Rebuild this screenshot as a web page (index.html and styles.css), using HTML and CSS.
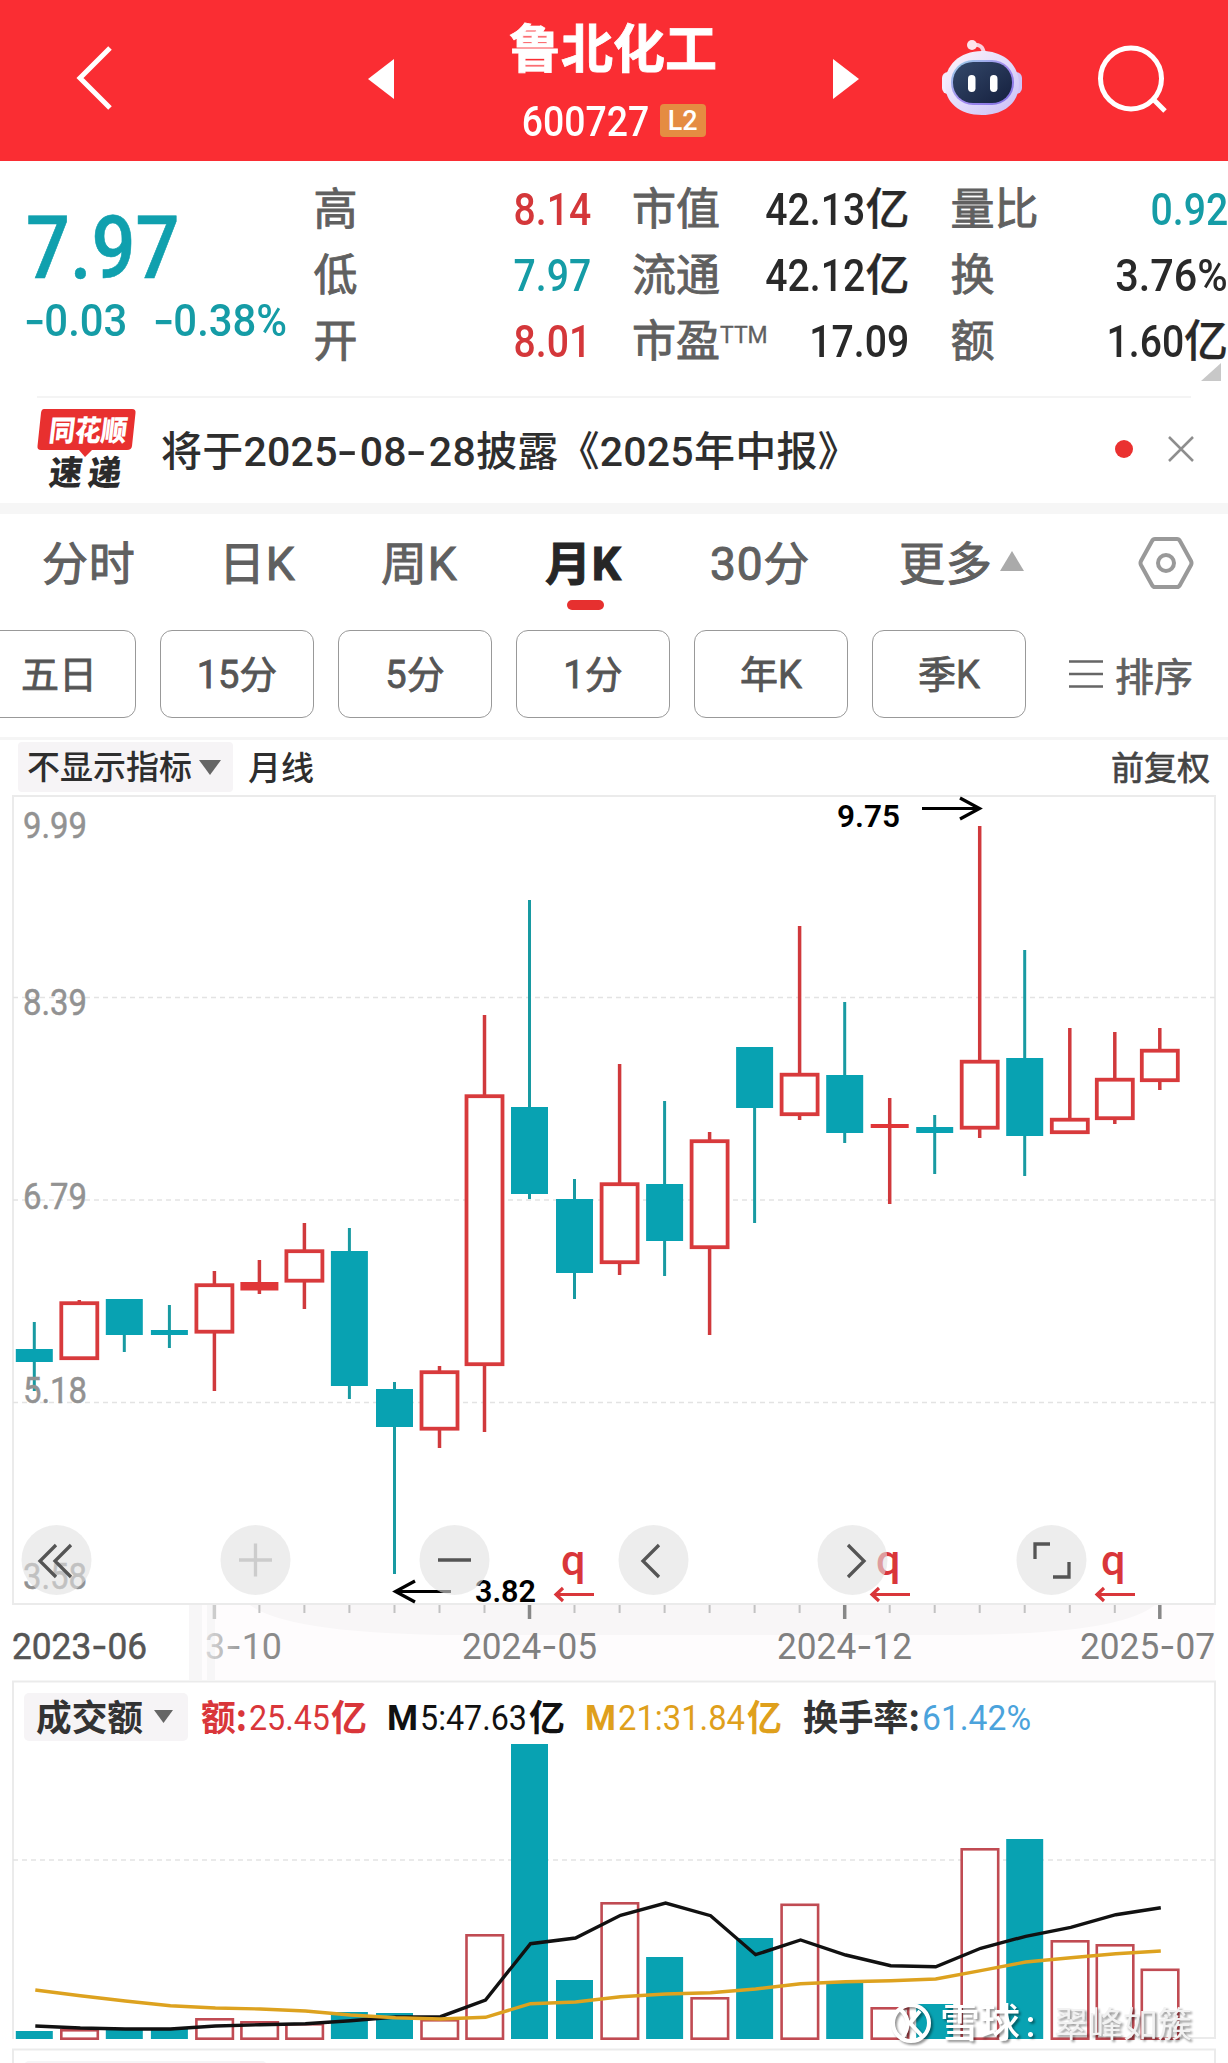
FILE: index.html
```html
<!DOCTYPE html>
<html lang="zh-CN">
<head>
<meta charset="utf-8">
<title>鲁北化工 600727</title>
<link rel="stylesheet" href="styles.css">
</head>
<body>
<header class="top">
  <svg class="back" width="44" height="68" viewBox="0 0 44 68"><path d="M38 4 8 34 38 64"/></svg>
  <svg class="prev" width="28" height="42" viewBox="0 0 28 42"><path d="M27 0V40L1 20Z"/></svg>
  <div class="title">
    <h1>鲁北化工</h1>
    <div class="code"><span class="num">600727</span><span class="badge">L2</span></div>
  </div>
  <svg class="next" width="28" height="42" viewBox="0 0 28 42"><path d="M0 0V40L26 20Z"/></svg>
  <svg class="robot" width="84" height="78" viewBox="0 0 84 78">
    <defs>
      <linearGradient id="shell" x1="0" y1="0" x2="1" y2="1"><stop offset="0" stop-color="#fff4fa"/><stop offset=".5" stop-color="#e3dcfb"/><stop offset="1" stop-color="#c9bdf6"/></linearGradient>
      <linearGradient id="rim" x1="0" y1="0" x2="1" y2="1"><stop offset="0" stop-color="#9ad6e6"/><stop offset=".5" stop-color="#a58cf0"/><stop offset="1" stop-color="#7b6de0"/></linearGradient>
      <linearGradient id="face" x1="0" y1="0" x2="1" y2="1"><stop offset="0" stop-color="#34486a"/><stop offset="1" stop-color="#15203e"/></linearGradient>
    </defs>
    <path d="M32 7Q43 5 44 16" fill="none" stroke="#fbd0dc" stroke-width="4"/>
    <circle cx="32" cy="7" r="5" fill="#fde4ec"/>
    <rect x="2" y="34" width="12" height="22" rx="6" fill="#f3ecfd"/>
    <rect x="70" y="34" width="12" height="22" rx="6" fill="#cfc3f8"/>
    <path d="M42 13C65 13 79 28 79 46S65 77 42 77 5 64 5 46 19 13 42 13Z" fill="url(#shell)"/>
    <rect x="11" y="22" width="63" height="45" rx="22" fill="url(#rim)"/>
    <rect x="13" y="24" width="59" height="41" rx="20" fill="url(#face)"/>
    <rect x="28" y="37" width="7.500" height="17" rx="3.700" fill="#fff"/>
    <rect x="50" y="37" width="7.500" height="17" rx="3.700" fill="#fff"/>
  </svg>
  <svg class="search" width="72" height="72" viewBox="0 0 72 72"><circle cx="33" cy="34.500" r="30.500"/><path d="M55 55 67 67"/></svg>
</header>

<section class="quote">
  <div class="last">
    <div class="price num">7.97</div>
    <div class="change"><span class="num"><i>-</i>0.03</span><span class="num"><i>-</i>0.38%</span></div>
  </div>
  <dl class="stats">
    <div><dt>高</dt><dd class="up"><span class="num">8.14</span></dd></div>
    <div><dt>低</dt><dd class="down"><span class="num">7.97</span></dd></div>
    <div><dt>开</dt><dd class="up"><span class="num">8.01</span></dd></div>
  </dl>
  <dl class="stats">
    <div><dt>市值</dt><dd><span class="num">42.13</span>亿</dd></div>
    <div><dt>流通</dt><dd><span class="num">42.12</span>亿</dd></div>
    <div><dt>市盈<sup>TTM</sup></dt><dd><span class="num">17.09</span></dd></div>
  </dl>
  <dl class="stats">
    <div><dt>量比</dt><dd class="down"><span class="num">0.92</span></dd></div>
    <div><dt>换</dt><dd><span class="num wide">3.76%</span></dd></div>
    <div><dt>额</dt><dd><span class="num">1.60</span>亿</dd></div>
  </dl>
  <svg class="corner" width="20" height="18" viewBox="0 0 20 18"><path d="M20 0V18H0Z"/></svg>
</section>

<section class="news">
  <svg class="logo" width="102" height="88" viewBox="0 0 102 88">
    <path d="M8 3H96Q100 3 99.500 7L96 40Q95.500 44 91 44H56L49 51 43 44H5Q1 44 1.500 40L5 7Q5.500 3 8 3Z" fill="#e8302f"/>
    <text transform="translate(12 35) skewX(-7)" textLength="78" lengthAdjust="spacingAndGlyphs" font-size="29" fill="#fff">同花顺</text>
    <text transform="translate(12 79) skewX(-7)" textLength="33" lengthAdjust="spacingAndGlyphs" font-size="34" fill="#2b2b2b">速</text>
    <text transform="translate(51 79) skewX(-7)" textLength="33" lengthAdjust="spacingAndGlyphs" font-size="34" fill="#2b2b2b">递</text>
  </svg>
  <p>将于2025<i>-</i>08<i>-</i>28披露《2025年中报》</p>
  <span class="dot"></span>
  <svg class="x" width="28" height="28" viewBox="0 0 28 28"><path d="M2 2 26 26M26 2 2 26"/></svg>
</section>

<nav class="tabs">
  <a>分时</a><a>日K</a><a>周K</a><a class="on">月K</a><a>30分</a><a>更多</a>
  <svg class="more" width="26" height="22" viewBox="0 0 26 22"><path d="M13 1 25 21H1Z"/></svg>
  <svg class="hex" width="56" height="54" viewBox="0 0 56 54"><path d="M17 3H39Q41 3 42 5L53 25Q54 27 53 29L42 49Q41 51 39 51H17Q15 51 14 49L3 29Q2 27 3 25L14 5Q15 3 17 3Z"/><circle cx="28" cy="27" r="8"/></svg>
</nav>

<div class="periods">
  <a>五日</a><a>15分</a><a>5分</a><a>1分</a><a>年K</a><a>季K</a>
  <div class="sort"><svg width="34" height="30" viewBox="0 0 34 30"><path d="M0 2.500H34M0 15H34M0 27.500H34"/></svg>排序</div>
</div>

<div class="chart-head">
  <span class="picker">不显示指标<svg width="22" height="15" viewBox="0 0 22 15"><path d="M0 0H22L11 15Z"/></svg></span>
  <b>月线</b>
  <span class="adjust">前复权</span>
</div>

<svg class="plot" width="1228" height="885" viewBox="0 795 1228 885">
  <defs><linearGradient id="fade"><stop offset="0" stop-color="#888" stop-opacity=".25"/><stop offset=".5" stop-color="#888" stop-opacity=".9"/><stop offset="1" stop-color="#888"/></linearGradient></defs>
  <path d="M190 1605H1215V1680H190Z" fill="#fefcfd"/>
  <path d="M250 1605H1155Q1120 1634 960 1635H460Q290 1634 250 1605Z" fill="#f8f6f7"/>
  <path d="M189 1605H202V1680H189ZM207 1605H215V1680H207Z" fill="#f7f6f7"/>
  <path class="frame" d="M13 1604V796H1215V1604Z"/>
  <path class="grid" d="M13 997.500H1215M13 1200H1215M13 1402.500H1215"/>
  <g id="candles"></g>
  <g class="scale">
    <text x="23" y="838" textLength="64">9.99</text>
    <text x="23" y="1015" textLength="64">8.39</text>
    <text x="23" y="1209" textLength="64">6.79</text>
    <text x="23" y="1403" textLength="64">5.18</text>
    <text x="23" y="1589" textLength="64">3.58</text>
  </g>
  <g class="mark">
    <text x="837" y="826.500" textLength="63">9.75</text><path d="M922 808.500H979M960 798 979.500 808.500 960 819"/>
    <text x="475" y="1602" textLength="61">3.82</text><path d="M451 1591.500H396M415 1581 395.500 1591.500 415 1602"/>
  </g>
  <g class="event">
    <text x="561" y="1575">q</text><path d="M594 1594.500H556M563 1588 556 1594.500 563 1601"/>
    <text x="876" y="1575">q</text><path d="M910 1594.500H872M879 1588 872 1594.500 879 1601"/>
    <text x="1101" y="1575">q</text><path d="M1135 1594.500H1097M1104 1588 1097 1594.500 1104 1601"/>
  </g>
  <g class="knobs">
    <circle cx="56.500" cy="1560" r="35"/><circle cx="255.500" cy="1560" r="35"/><circle cx="454.500" cy="1560" r="35"/>
    <circle cx="653.500" cy="1560" r="35"/><circle cx="852.500" cy="1560" r="35"/><circle cx="1051.500" cy="1560" r="35"/>
    <path d="M56 1545 40 1561 56 1577M71 1545 55 1561 71 1577M438 1560H471M659 1545 643 1561 659 1577M848 1545 864 1561 848 1577M1035 1559V1544H1050M1053 1577H1069V1562"/>
    <path class="off" d="M239 1560H272M255.500 1543.500V1576.500"/>
  </g>
  <g id="ticks"></g>
  <g class="dates">
    <text x="12" y="1659" textLength="135" class="dark">2023<tspan>-</tspan>06</text>
    <text x="205" y="1659" textLength="77" fill="url(#fade)">3<tspan>-</tspan>10</text>
    <text x="462" y="1659" textLength="135">2024<tspan>-</tspan>05</text>
    <text x="777" y="1659" textLength="135">2024<tspan>-</tspan>12</text>
    <text x="1080" y="1659" textLength="135">2025<tspan>-</tspan>07</text>
  </g>
</svg>

<svg class="plot" width="1228" height="383" viewBox="0 1680 1228 383">
  <path class="frame" d="M13 2039V1681.500H1215V2038H1150M13 2063V2049.500H1215V2063"/>
  <path class="grid" d="M13 1860H1215"/>
  <rect x="24" y="1693" width="164" height="48" rx="5" fill="#f6f4f6"/>
  <rect x="24" y="2061" width="243" height="10" rx="5" fill="#f6f4f6"/>
  <path d="M154 1710H173L163.500 1723Z" fill="#666"/>
  <g class="legend">
    <text class="cjk" x="36" y="1731" textLength="107" fill="#333">成交额</text>
    <g fill="#d9363a"><text class="cjk" x="201" y="1731" textLength="46">额:</text><text x="249" y="1730" textLength="81">25.45</text><text class="cjk" x="331" y="1731" textLength="36">亿</text></g>
    <g fill="#111"><text class="m" x="387" y="1730" textLength="31">M</text><text x="420" y="1730" textLength="107">5:47.63</text><text class="cjk" x="529" y="1731" textLength="36">亿</text></g>
    <g fill="#dfa01c"><text class="m" x="585" y="1730" textLength="31">M</text><text x="618" y="1730" textLength="127">21:31.84</text><text class="cjk" x="747" y="1731" textLength="35">亿</text></g>
    <text class="cjk" x="803" y="1731" textLength="117" fill="#333">换手率:</text><text x="922" y="1730" textLength="109" fill="#4ba3dc">61.42%</text>
  </g>
  <g id="bars"></g>
  <g class="water">
    <circle cx="911" cy="2023" r="18"/>
    <path d="M901 2010Q913 2021 903 2037M920 2011 910 2023 922 2036"/>
    <text x="940" y="2037" font-size="40">雪球</text><text x="1023" y="2036" font-size="30">：</text>
    <text class="author" x="1054" y="2037" font-size="35" textLength="138">翠峰如簇</text>
  </g>
</svg>
<script src="chart.js"></script>
</body>
</html>
```
FILE: styles.css
```css
* { box-sizing: border-box; }
body { margin: 0; width: 1228px; height: 2063px; overflow: hidden; background: #fff; color: #333; font-family: Roboto, "Noto Sans CJK SC", sans-serif; }
svg { display: block; flex: none; }
i { display: inline-block; font-style: normal; font-family: Inter, sans-serif; transform: scaleX(1.15); }
.num { display: inline-block; transform: scaleX(.89); transform-origin: right; }

.top { display: flex; height: 161px; background: #fa2d33; color: #fff; }
.back { margin: 44px 0 0 72px; fill: none; stroke: #fff; stroke-width: 5; }
.prev { margin: 59px 0 0 251px; fill: #fff; }
.title { width: 438px; text-align: center; }
h1 { margin: 15px 0 0 -2px; font-size: 52px; line-height: 72px; font-weight: 700; -webkit-text-stroke: .8px; }
.code { display: flex; align-items: center; justify-content: center; gap: 10px; height: 66px; margin-left: -16px; font-size: 42px; font-weight: 500; padding-top: 3px; }
.badge { width: 46px; height: 33px; border-radius: 4px; background: #e58c42; font-size: 27px; line-height: 34px; font-weight: 500; margin-top: -2px; }
.next { margin: 59px 0 0; fill: #fff; }
.robot { margin: 38px 0 0 79px; }
.search { margin: 44px 0 0 74px; fill: none; stroke: #fff; stroke-width: 5; }

.quote { display: flex; position: relative; height: 235px; padding-top: 16px; }
.last { width: 315px; padding-left: 28px; color: #10a0ae; }
.last .num { transform-origin: left; }
.price { font-size: 88px; font-weight: 500; line-height: 90px; margin: 26px 0 0 -2px; -webkit-text-stroke: .6px; }
.price.num { transform: scaleX(.88); }
.change { display: flex; width: 280px; font-size: 45px; line-height: 56px; margin: -1px 0 0 -3px; color: #159ca6; font-weight: 500; }
.change .num { transform: scaleX(.93); white-space: nowrap; }
.change .num:first-child { width: 129px; flex: none; }
.stats { margin: 0 42px 0 0; width: 277px; }
.stats:last-of-type { margin: 0; }
.stats div { display: flex; justify-content: space-between; height: 66px; line-height: 66px; font-size: 44px; color: #606060; white-space: nowrap; }
.stats dt { margin-left: -1px; -webkit-text-stroke: .9px; }
.stats dd { margin: 0; color: #292929; font-weight: 500; -webkit-text-stroke: .3px; }
.stats .num { font-weight: 500; -webkit-text-stroke: 0; }
.stats .wide { transform: scaleX(.94); }
.stats dd.up { color: #d4373a; }
.stats dd.down { color: #159ca6; }
sup { font-size: 23px; line-height: 0; vertical-align: 14px; -webkit-text-stroke: .3px; }
.corner { position: absolute; left: 1201px; top: 202px; fill: #c8c8c8; }

.news { display: flex; align-items: center; height: 118px; border-bottom: 11px solid #f6f6f6; background: linear-gradient(#f4f4f4, #f4f4f4) 37px 0 / 1154px 2px no-repeat; }
.logo { margin-left: 36px; font-family: "Noto Sans CJK SC", sans-serif; font-weight: 900; }
.news p { width: 715px; margin: -4px 0 0 23px; font-size: 41px; font-weight: 500; color: #2e2e2e; white-space: nowrap; letter-spacing: .25px; }
.news i { width: 22px; }
.dot { width: 18px; height: 18px; margin-left: 239px; margin-top: -1px; border-radius: 50%; background: #ea3130; }
.x { margin: -1px 0 0 34px; fill: none; stroke: #8e8e8e; stroke-width: 2.500; }

.tabs { display: grid; grid-template-columns: 177px 162px 164px 165px 189px 100px 139px 60px; height: 112px; padding-left: 42px; padding-top: 22px; font-size: 46px; line-height: 56px; color: #606060; -webkit-text-stroke: 1px; align-items: start; }
.tabs a { white-space: nowrap; letter-spacing: .8px; }
.tabs .on { color: #262626; font-weight: 700; position: relative; }
.tabs .on::after { content: ""; position: absolute; left: 22px; top: 64px; width: 37px; height: 10px; border-radius: 5px; background: #e6302f; }
.more { margin-top: 14px; fill: #aaa; }
.hex { fill: none; stroke: #999; stroke-width: 4; }

.periods { display: flex; gap: 24px; height: 114px; margin-left: -18px; padding-top: 4px; border-bottom: 3px solid #f5f5f5; }
.periods > a { flex: none; width: 154px; height: 88px; border: 1.500px solid #999; border-radius: 12px; text-align: center; font-size: 38px; line-height: 88px; color: #555; -webkit-text-stroke: .8px; }
.sort { display: flex; align-items: center; gap: 12px; height: 88px; margin-left: 19px; font-size: 39px; color: #606060; white-space: nowrap; -webkit-text-stroke: .7px; }
.sort svg { fill: none; stroke: #666; stroke-width: 2.500; }

.chart-head { display: flex; height: 55px; padding: 2px 18px 0 18px; font-size: 33px; line-height: 53px; color: #2e2e2e; white-space: nowrap; }
.picker { display: flex; align-items: center; gap: 7px; width: 215px; height: 50px; padding-left: 9px; border-radius: 4px; background: #f6f4f6; font-weight: 500; }
.picker svg { fill: #666; }
.chart-head b { margin-left: 15px; font-weight: 500; }
.adjust { margin-left: auto; color: #444; -webkit-text-stroke: .7px; }

.frame { fill: none; stroke: #ebebeb; stroke-width: 2; }
.grid { fill: none; stroke: #e3e3e3; stroke-width: 1.500; stroke-dasharray: 5 4; }
.scale { font-size: 36px; fill: #929292; stroke: #929292; stroke-width: .5; }
.mark { font-size: 32px; font-weight: 600; fill: #000; }
.mark path { fill: none; stroke: #000; stroke-width: 3.200; }
.event { font-size: 43px; font-weight: 500; fill: #d9363a; }
.event path { fill: none; stroke: #d9363a; stroke-width: 3.200; }
.knobs circle { fill: #e1e1e1; opacity: .6; }
.knobs path { fill: none; stroke: #555; stroke-width: 3.300; }
.knobs .off { stroke: #ccc; }
.dates { font-size: 36px; fill: #808080; }
.dates tspan { font-family: Inter, sans-serif; }
.dates .dark { fill: #555; stroke: #555; stroke-width: .5; }
.tick { stroke: #c2c2c2; stroke-width: 2; }
.tick.major { stroke: #888; stroke-width: 3.500; }
.tick.pale { stroke: #ccc; }
.legend { font-size: 35px; }
.legend .cjk { font-family: "Noto Sans CJK SC", sans-serif; font-weight: 700; font-size: 36px; }
.legend .m { font-weight: 700; }
.solid { fill: #08a2b2; }
.wick-down { stroke: #189aa2; stroke-width: 3; }
.wick-up { stroke: #d0393c; stroke-width: 3.500; }
.hollow { fill: #fff; stroke: #d83a3c; stroke-width: 3.800; }
.thin { fill: #e03638; }
.bar { fill: #fff; stroke: #c04b53; stroke-width: 2.600; }
.ma { fill: none; stroke: #111; stroke-width: 3.400; }
.ma.long { stroke: #dda21f; }
.water { font-family: "Noto Sans CJK SC", sans-serif; fill: #fff; font-weight: 500; filter: drop-shadow(2px 2px 1px rgba(0,0,0,.42)); }
.water circle, .water path { fill: none; stroke: #fff; stroke-width: 4; }
.water .author { font-weight: 400; fill: #f2f2f2; }
```
FILE: chart.js
```js
// Monthly rows: direction, high, body top, body bottom, low, turnover bar top, M5, M21 (plot units).
const rows = [
  ["d",1322,1349,1362,1391,2031,2026,1990], ["u",1300,1301,1360,1360,2029,2028,1995.7],
  ["d",1299,1299,1335,1352,2030,2029,2001], ["d",1305,1330,1335,1348,2029,2029,2005.7],
  ["u",1271,1283,1333.5,1391,2018,2026,2008], ["u",1260,1282,1290.5,1294,2021,2024.7,2009],
  ["u",1223,1249,1282.5,1309,2023,2023.7,2011], ["d",1228,1251,1386,1399,2012,2020.7,2015],
  ["d",1382,1389,1427,1574,2013,2017,2017.7], ["u",1366,1370,1430.5,1448,2019,2016.7,2019],
  ["u",1015,1094,1366,1432,1934,2000,2017.3], ["d",900,1107,1194,1199,1744,1943.7,2003.7],
  ["d",1179,1199,1273,1299,1980,1938,2002], ["u",1064,1182,1264,1275,1902,1915.3,1996.7],
  ["d",1101,1184,1241,1276,1957,1903,1994], ["u",1132,1139,1249,1335,1997,1915.7,1992.7],
  ["d",1047,1047,1108,1223,1938,1954.7,1989], ["u",926,1072.5,1116,1120,1903.5,1940,1983.7],
  ["d",1002,1075,1133,1143,1983,1955,1981.7], ["u",1098,1124,1128,1204,2007,1965.7,1980.7],
  ["d",1115,1127,1133,1174,2004,1966.7,1979], ["u",826,1059.5,1129.5,1138,1848,1948.3,1970.7],
  ["d",950,1058,1136,1176,1839,1936.3,1962], ["u",1028,1117.5,1134,1134,1940,1927.3,1957.7],
  ["u",1032,1077.5,1120,1124,1944,1914.7,1953.7], ["u",1028,1048.5,1082,1090,1968.5,1907.7,1951]
];
const BASE = 2039;
let candles = "", bars = "", ticks = "";
const m5 = [], m21 = [];
const line = (cls, x, a, b) => `<path class="${cls}" d="M${x} ${a}V${b}"/>`;
rows.forEach(([dir, hi, top, bot, lo, vol, a, b], i) => {
  const x = +(34.3 + 45.02 * i).toFixed(1);
  const wick = dir === "u" ? "wick-up" : "wick-down";
  if (dir === "d") {
    candles += line(wick, x, hi, lo) + `<rect class="solid" x="${x - 18.5}" y="${top}" width="37" height="${bot - top}"/>`;
    bars += `<rect class="solid" x="${x - 18.5}" y="${vol}" width="37" height="${BASE - vol}"/>`;
  } else {
    candles += line(wick, x, hi, top + 2) + line(wick, x, bot - 2, lo);
    candles += bot - top < 10
      ? `<rect class="thin" x="${x - 19}" y="${top}" width="38" height="${bot - top}"/>`
      : `<rect class="hollow" x="${x - 18}" y="${top + 2.2}" width="36" height="${bot - top - 4}"/>`;
    bars += `<rect class="bar" x="${x - 18}" y="${vol + 1.3}" width="36.5" height="${BASE - vol - 1.6}"/>`;
  }
  m5.push(x + 1 + "," + a);
  m21.push(x + 1 + "," + b);
  if (i >= 4) {
    const major = (i - 4) % 7 === 0;
    ticks += line("tick" + (major ? (i === 4 ? " major pale" : " major") : ""), x, 1605, major ? 1619 : 1613);
  }
});
document.querySelectorAll(".plot text[textLength]").forEach(t => t.setAttribute("lengthAdjust", "spacingAndGlyphs"));
document.getElementById("candles").innerHTML = candles;
document.getElementById("ticks").innerHTML = ticks;
document.getElementById("bars").innerHTML = bars +
  `<polyline class="ma" points="${m5.join(" ")}"/><polyline class="ma long" points="${m21.join(" ")}"/>`;
```
